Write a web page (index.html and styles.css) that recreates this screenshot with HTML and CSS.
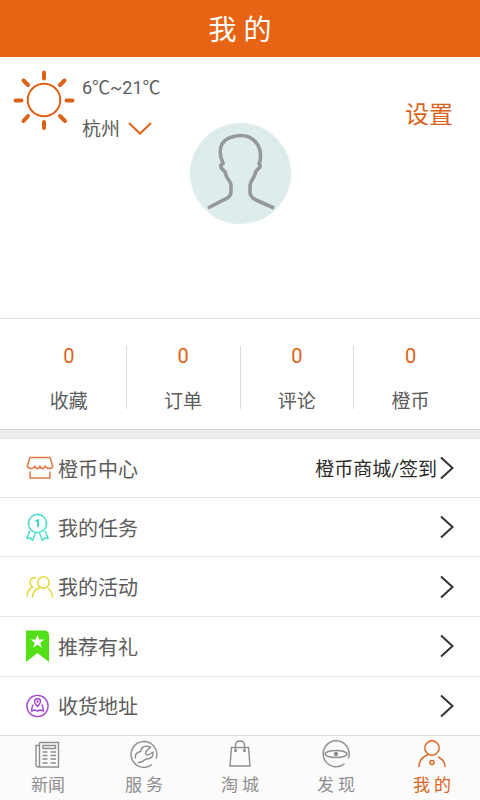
FILE: index.html
```html
<!DOCTYPE html>
<html lang="zh-CN">
<head>
<meta charset="utf-8">
<meta name="viewport" content="width=device-width, initial-scale=1">
<title>我的</title>
<link rel="stylesheet" href="styles.css">
</head>
<body>
<header class="topbar"><h1>我 的</h1></header>

<main class="content">
  <section class="profile">
    <div class="weather">
      <svg class="sun" viewBox="0 0 62 62" fill="none" stroke="#dd6219" aria-hidden="true">
        <circle cx="31" cy="30" r="16.300" stroke-width="2"/>
        <path stroke-width="4" stroke-linecap="round" d="M31 2.500v6M31 52v6M2.500 30.500h6M53.500 30.500h6M10.500 10.500l4.500 4.500M47 46l5 5M51.500 10.500L47 15M15 46l-4.500 5"/>
      </svg>
      <div class="weather-text">
        <span class="temp">6℃~21℃</span>
        <button class="city" type="button">杭州
          <svg class="down" viewBox="0 0 24 17" fill="none" stroke="#dd6219" stroke-width="2" aria-hidden="true"><path d="M1 1l11 10.500L23 1"/></svg>
        </button>
      </div>
    </div>
    <svg class="avatar" viewBox="0 0 101 101" role="img" aria-label="头像">
      <circle cx="50.500" cy="50.500" r="50.500" fill="#deecec"/>
      <path d="M4 42A48 48 0 0 1 50 3.500M66 6a48 48 0 0 1 30 34" fill="none" stroke="#cfe0e0" stroke-width=".7"/>
      <path d="M18 85l15.500-8Q41 74 41 69v-6q0-3-2-5.500-3-4-4-8.500l-4-4.500V42l2-1.500Q28 29 32 21q3-5 10-7 9-3 17 0 14 7 11 24l-1 2.500 1 1V44l-4 4q-1 5-4 9-2 3-2 6v6q0 5 6 8l18 8" fill="none" stroke="#969999" stroke-width="3.600"/>
    </svg>
    <a class="settings" href="#settings">设置</a>
  </section>

  <section class="stats">
    <a class="stat" href="#favorites"><b>0</b><span>收藏</span></a>
    <a class="stat" href="#orders"><b>0</b><span>订单</span></a>
    <a class="stat" href="#comments"><b>0</b><span>评论</span></a>
    <a class="stat" href="#coins"><b>0</b><span>橙币</span></a>
  </section>

  <nav class="menu">
    <a class="row" href="#coin-center">
      <svg class="icon wide" viewBox="0 0 28 24" fill="none" stroke="#e07a45" stroke-width="1.500" stroke-linejoin="round" aria-hidden="true"><path d="M4 1.500h20l2.700 8.500q0 2.500-3 2.500T19 10q-.5 2.500-2.700 2.500T14 10q-.5 2.500-2.500 2.500T9 10q-1 2.500-4 2.500T1.300 10zM4 15.500v6.500h20v-6.500"/></svg>
      <span class="name">橙币中心</span>
      <span class="note">橙币商城/签到</span>
      <svg class="next" viewBox="0 0 14 24" aria-hidden="true"><path d="M1 1.500L12.500 12 1 22.500"/></svg>
    </a>
    <a class="row" href="#tasks">
      <svg class="icon" viewBox="0 0 23 28" fill="none" stroke="#43dcc8" stroke-width="1.400" stroke-linejoin="round" aria-hidden="true"><circle cx="11.500" cy="10.500" r="9" stroke-width="1.300"/><circle cx="11.500" cy="10.500" r="9.500" stroke-dasharray="2 2" stroke-width="1"/><path d="M9.500 8.500l2.500-1.500v7" stroke-width="2"/><path d="M4 17.500L.8 25.500l3.700-.5 2 2.500 3-7.500M19 17.500l3.200 8-3.700-.5-2 2.500-3-7.500"/></svg>
      <span class="name">我的任务</span>
      <svg class="next" viewBox="0 0 14 24" aria-hidden="true"><path d="M1 1.500L12.500 12 1 22.500"/></svg>
    </a>
    <a class="row" href="#activities">
      <svg class="icon wide" viewBox="0 0 28 24" fill="none" stroke="#e3d83c" stroke-width="1.500" stroke-linecap="round" aria-hidden="true"><circle cx="17.500" cy="7.500" r="5.700"/><path d="M6.500 22q0-6 7-9.500M22.500 14q4 3 4 8M9.500 2.500Q4.500 3 4 7q0 3 2.500 5Q1 15 1 21"/></svg>
      <span class="name">我的活动</span>
      <svg class="next" viewBox="0 0 14 24" aria-hidden="true"><path d="M1 1.500L12.500 12 1 22.500"/></svg>
    </a>
    <a class="row" href="#recommend">
      <svg class="icon flag" viewBox="0 0 23 32" aria-hidden="true"><path fill="#51df16" d="M0 .500h18q5 0 5 5V32l-11.500-9L0 32z"/><path fill="#fff" d="M11.500 4.500l1.800 5h5.200l-4.200 3.200 1.600 5.100-4.400-3.100-4.400 3.100 1.600-5.100-4.200-3.200h5.200z"/></svg>
      <span class="name">推荐有礼</span>
      <svg class="next" viewBox="0 0 14 24" aria-hidden="true"><path d="M1 1.500L12.500 12 1 22.500"/></svg>
    </a>
    <a class="row" href="#address">
      <svg class="icon" viewBox="0 0 23 24" fill="none" stroke="#a746d4" stroke-width="1.400" stroke-linejoin="round" aria-hidden="true"><circle cx="11.500" cy="12" r="10.600"/><path d="M11.500 12.500q-3-3-3-5.200 0-2.500 3-2.500t3 2.500q0 2.200-3 5.200zM7.500 11l-1 .5-1 5.500 3.500-1 2.500 1 2.500-1 3.500 1-1-5.500-1-.5"/><circle cx="11.500" cy="7.500" r=".5"/></svg>
      <span class="name">收货地址</span>
      <svg class="next" viewBox="0 0 14 24" aria-hidden="true"><path d="M1 1.500L12.500 12 1 22.500"/></svg>
    </a>
  </nav>
</main>

<nav class="tabs">
  <a class="tab" href="#news">
    <svg viewBox="0 0 28 28" aria-hidden="true"><path d="M5.500 2.500h19v24.500h-20q-2.500 0-2.500-2V5.500h3.500M5.500 2.500V25q0 2-1.500 2M9 5.500h12.500v3H9zM8.500 12h5M16.500 12h5.500M8.500 15.500h5M16.500 15.500h5.500M8.500 19h5M16.500 19h5.500M8.500 23h5M16.500 23h5.500"/></svg>
    <span>新闻</span>
  </a>
  <a class="tab" href="#service">
    <svg viewBox="0 0 28 28" aria-hidden="true"><path d="M26.200 18.500A12.900 12.900 0 1 0 22 24.500M5.500 18.500Q4.500 12.500 10.500 11.500q1-5 5.500-5.200 3-.3 4.500.9L16 11.500q-1 1.500.3 3 1.200 1 3 0l3.700-2.300q.5 5.300-4 6.300-3 .2-4.500 1.500-2.500 2.500-6.500 2.500"/></svg>
    <span>服 务</span>
  </a>
  <a class="tab" href="#mall">
    <svg viewBox="0 0 28 28" aria-hidden="true"><path d="M5.500 7.500h17l1.500 18.500H4zM9.500 10.500V5q0-4 4.500-4t4.500 4v5.500"/><circle cx="9.500" cy="10.500" r=".8"/><circle cx="18.500" cy="10.500" r=".8"/></svg>
    <span>淘 城</span>
  </a>
  <a class="tab" href="#discover">
    <svg viewBox="0 0 28 28" aria-hidden="true"><path d="M26.300 18.500A13 13 0 1 0 22.500 23.800"/><ellipse cx="14" cy="14" rx="11" ry="3.500"/><circle cx="14" cy="14" r="1.500" fill="currentColor"/></svg>
    <span>发 现</span>
  </a>
  <a class="tab active" href="#mine" aria-current="page">
    <svg viewBox="0 0 28 28" aria-hidden="true"><circle cx="14" cy="8" r="7.200"/><path d="M1 27q0-9.500 9.500-12.500M20 17q7 3 7 10"/><circle cx="14" cy="22.500" r="2"/></svg>
    <span>我 的</span>
  </a>
</nav>
</body>
</html>
```

FILE: styles.css
```css
* {
  box-sizing: border-box;
}

body {
  margin: 0;
  min-height: 100vh;
  display: flex;
  flex-direction: column;
  background: #fff;
  color: #5c5c5c;
  font-family: Roboto, "Noto Sans CJK SC", sans-serif;
  font-size: 20px;
  line-height: 28px;
}

a {
  color: inherit;
  text-decoration: none;
}

svg {
  display: block;
  flex: none;
}

.topbar {
  background: #e66414;
  color: #fff;
  text-align: center;
}

.topbar h1 {
  margin: 0;
  padding: 11px 0 6px;
  font-size: 28px;
  font-weight: 400;
  line-height: 40px;
}

.content {
  flex: 1;
  display: flex;
  flex-direction: column;
}

.profile {
  display: grid;
  grid-template-columns: 1fr auto 1fr;
  align-items: start;
  padding: 13px 0 94px;
}

.weather {
  display: flex;
  gap: 7px;
  padding-left: 13px;
}

.sun {
  width: 62px;
  height: 62px;
}

.weather-text {
  display: flex;
  flex-direction: column;
  gap: 14px;
  padding-top: 4px;
  white-space: nowrap;
}

.temp {
  font-size: 18px;
}

.city {
  display: flex;
  align-items: center;
  gap: 8px;
  padding: 0;
  border: 0;
  background: none;
  color: inherit;
  font: inherit;
  font-size: 19px;
}

.down {
  width: 24px;
  height: 17px;
}

.avatar {
  width: 101px;
  height: 101px;
  margin-top: 53px;
}

.settings {
  justify-self: end;
  margin: 31px 27px 0 0;
  color: #dd6219;
  font-size: 24px;
}

.stats {
  display: grid;
  grid-template-columns: repeat(4, 1fr);
  padding: 27px 13px 20px 12px;
  border-top: 1px solid #e2e2e2;
  border-bottom: 1px solid #d6d6d6;
}

.stat {
  display: flex;
  flex-direction: column;
  align-items: center;
  gap: 26px;
  height: 63px;
  font-size: 19px;
}

.stat + .stat {
  border-left: 1px solid #dadada;
}

.stat b {
  color: #dd6219;
  font-size: 20px;
  font-weight: 400;
  line-height: 20px;
}

.stat span {
  line-height: 20px;
}

.menu {
  flex: 1;
  display: flex;
  flex-direction: column;
  border-top: 8px solid #eee;
}

.row {
  flex: 1;
  min-height: 59px;
  display: flex;
  align-items: center;
  padding: 0 26px;
  border-top: 1px solid #e4e4e4;
}

.icon {
  width: 23px;
  margin-right: 9px;
}

.icon.wide {
  width: 28px;
  margin-right: 4px;
}

.name,
.note {
  padding-top: 3px;
}

.name {
  flex: 1;
}

.note {
  margin-right: 3px;
  color: #2b2b2b;
  font-size: 19px;
}

.next {
  width: 14px;
  height: 24px;
  fill: none;
  stroke: #333;
  stroke-width: 2;
}

.tabs {
  display: grid;
  grid-template-columns: repeat(5, 1fr);
  padding: 4px 0 3px;
  border-top: 1px solid #dedede;
  background: #fbfbfb;
  color: #8e8e8e;
}

.tab {
  display: flex;
  flex-direction: column;
  align-items: center;
  gap: 5px;
  font-size: 17px;
  line-height: 24px;
}

.tab svg {
  width: 28px;
  height: 28px;
  fill: none;
  stroke: currentColor;
  stroke-width: 1.4;
}

.tab.active {
  color: #dd6219;
}
```
